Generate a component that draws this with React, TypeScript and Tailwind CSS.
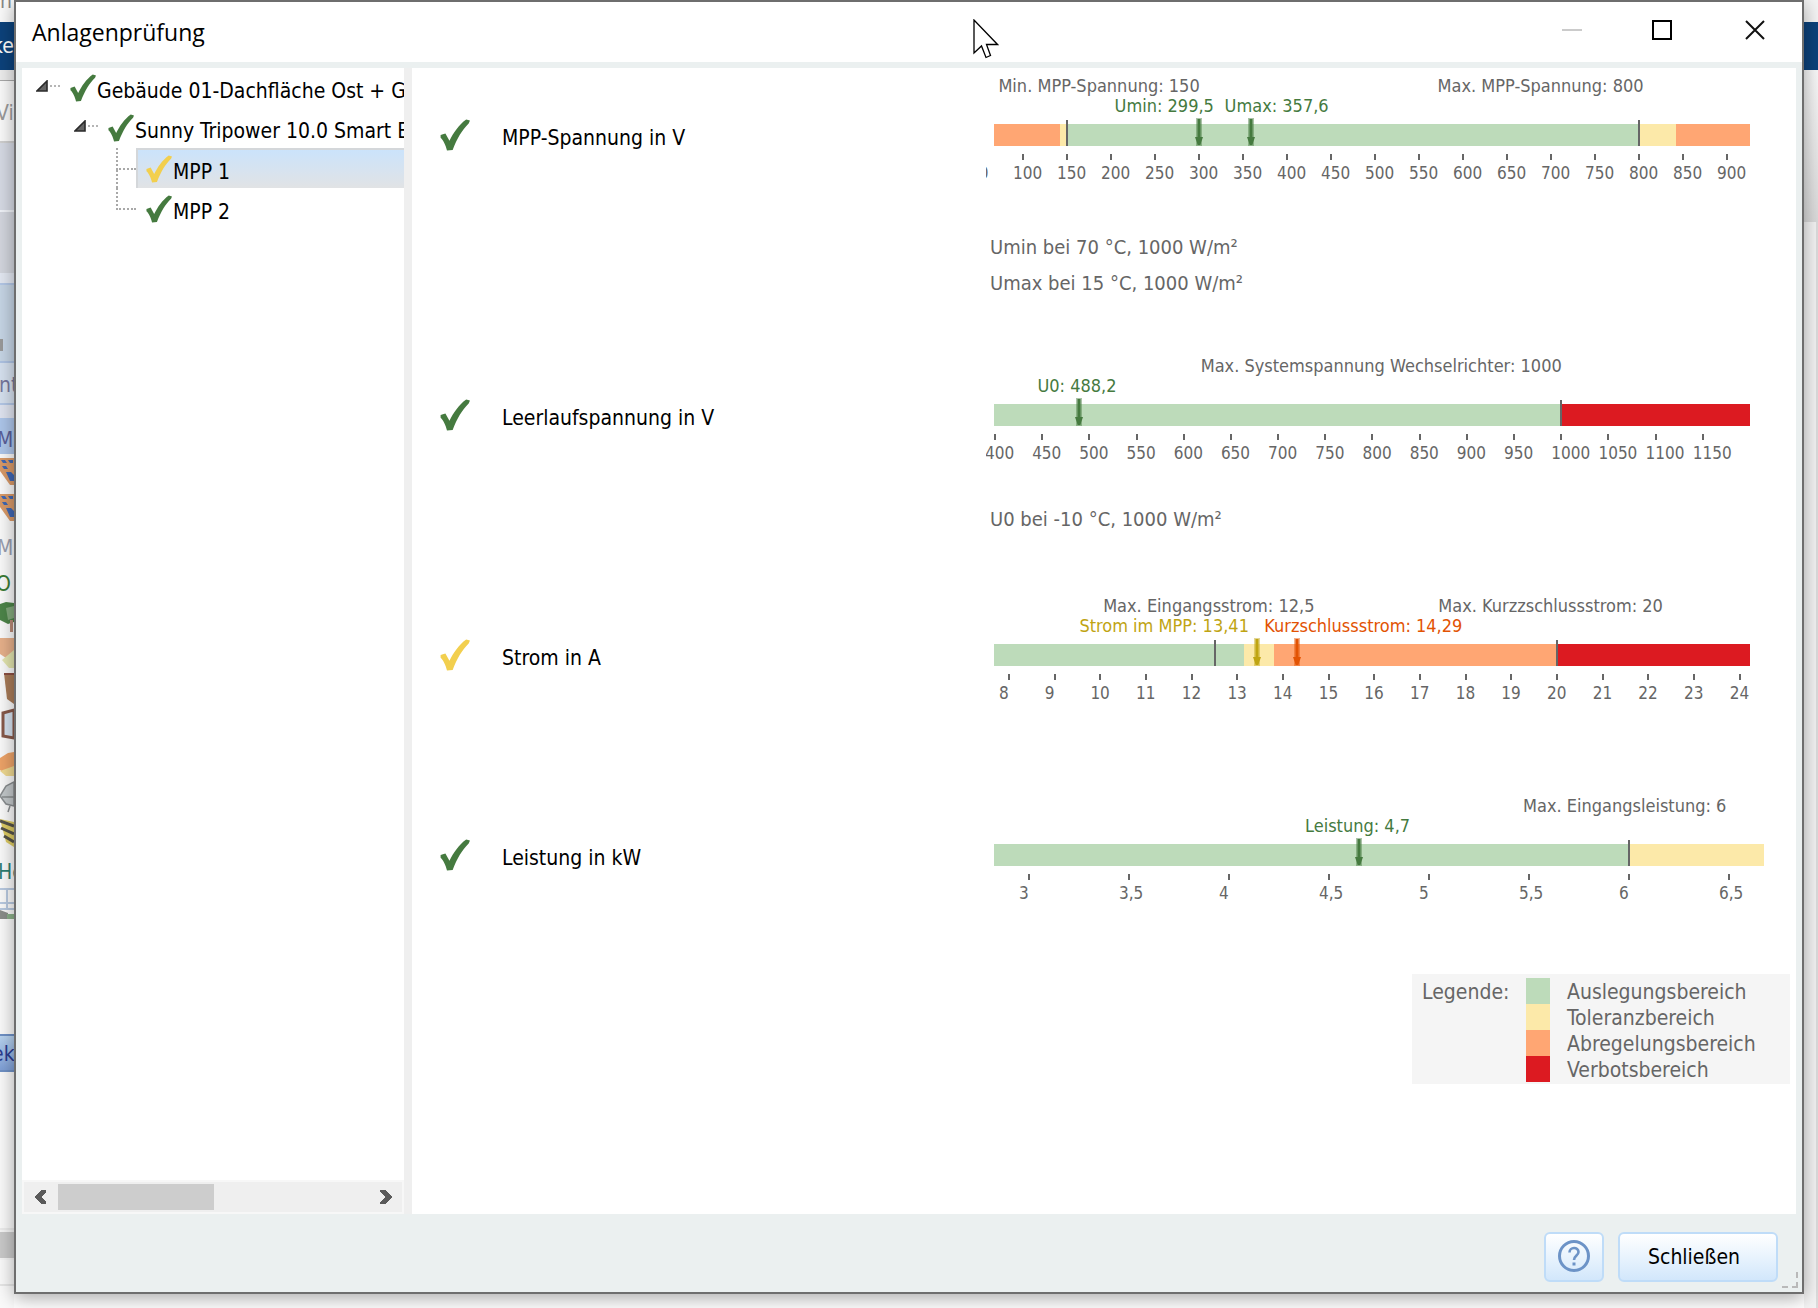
import { Fragment } from "react";

const BRAND = {
  green: "#457a3f",
  yellow: "#bfa413",
  orange: "#e25303",
};

const ZONE = {
  ok: "bg-[#bddbba]",
  tolerance: "bg-[#fce9a9]",
  derating: "bg-[#ffa673]",
  forbidden: "bg-[#dc1a21]",
};

type Tone = keyof typeof BRAND;

type Check = {
  label: string;
  status: "green" | "yellow";
  min: number;
  max: number;
  zones: { to: number; kind: keyof typeof ZONE }[];
  limits: { at: number; text: string; textAt: number }[];
  values: { at: number; text: string; textAt: number; tone: Tone }[];
  ticks: number[];
  notes?: string[];
  rowClass: string;
  noteClass?: string;
};

const range = (from: number, to: number, step: number) =>
  Array.from({ length: Math.round((to - from) / step) + 1 }, (_, i) => from + i * step);

const CHECKS: Check[] = [
  {
    label: "MPP-Spannung in V",
    status: "green",
    min: 67,
    max: 926,
    zones: [
      { to: 142, kind: "derating" },
      { to: 150, kind: "tolerance" },
      { to: 800, kind: "ok" },
      { to: 842, kind: "tolerance" },
      { to: 926, kind: "derating" },
    ],
    limits: [
      { at: 150, text: "Min. MPP-Spannung: 150", textAt: 72 },
      { at: 800, text: "Max. MPP-Spannung: 800", textAt: 571 },
    ],
    values: [
      { at: 299.5, text: "Umin: 299,5", textAt: 204, tone: "green" },
      { at: 358.5, text: "Umax: 357,6", textAt: 329, tone: "green" },
    ],
    ticks: range(50, 900, 50),
    notes: ["Umin bei 70 °C, 1000 W/m²", "Umax bei 15 °C, 1000 W/m²"],
    rowClass: "min-h-[280px]",
    noteClass: "mt-[46px]",
  },
  {
    label: "Leerlaufspannung in V",
    status: "green",
    min: 399,
    max: 1200,
    zones: [
      { to: 1000, kind: "ok" },
      { to: 1200, kind: "forbidden" },
    ],
    limits: [{ at: 1000, text: "Max. Systemspannung Wechselrichter: 1000", textAt: 618 }],
    values: [{ at: 489, text: "U0: 488,2", textAt: 445, tone: "green" }],
    ticks: range(400, 1150, 50),
    notes: ["U0 bei -10 °C, 1000 W/m²"],
    rowClass: "min-h-[240px]",
    noteClass: "mt-[38px]",
  },
  {
    label: "Strom in A",
    status: "yellow",
    min: 7.67,
    max: 24.226,
    zones: [
      { to: 13.15, kind: "ok" },
      { to: 13.8, kind: "tolerance" },
      { to: 20, kind: "derating" },
      { to: 24.226, kind: "forbidden" },
    ],
    limits: [
      { at: 12.5, text: "Max. Eingangsstrom: 12,5", textAt: 10.06 },
      { at: 20, text: "Max. Kurzzschlussstrom: 20", textAt: 17.4 },
    ],
    values: [
      { at: 13.43, text: "Strom im MPP: 13,41", textAt: 9.54, tone: "yellow" },
      { at: 14.3, text: "Kurzschlussstrom: 14,29", textAt: 13.59, tone: "orange" },
    ],
    ticks: range(8, 24, 1),
    rowClass: "min-h-[200px]",
  },
  {
    label: "Leistung in kW",
    status: "green",
    min: 2.825,
    max: 6.605,
    zones: [
      { to: 6, kind: "ok" },
      { to: 6.675, kind: "tolerance" },
    ],
    limits: [{ at: 6, text: "Max. Eingangsleistung: 6", textAt: 5.47 }],
    values: [{ at: 4.65, text: "Leistung: 4,7", textAt: 4.38, tone: "green" }],
    ticks: range(3, 6.5, 0.5),
    rowClass: "min-h-[186px]",
  },
];

const LEGEND = [
  { text: "Auslegungsbereich", color: ZONE.ok },
  { text: "Toleranzbereich", color: ZONE.tolerance },
  { text: "Abregelungsbereich", color: ZONE.derating },
  { text: "Verbotsbereich", color: ZONE.forbidden },
];

function CheckMark({ tone, className }: { tone: "green" | "yellow"; className: string }) {
  return (
    <svg viewBox="0 0 28 30" className={className} fill={tone === "green" ? "#457a3f" : "#f2cf4e"} aria-hidden="true">
      <path d="M0.500 15 L5 13.500 L8.800 20.500 C12.500 13 17.500 5.500 24.500 0.500 L28 1.500 L27 4 C20.500 10.500 16 18 11.800 29 L6.500 29.500 C5.500 25 3 19.500 0.500 17.500 Z" />
    </svg>
  );
}

function Expander() {
  return (
    <>
      <svg viewBox="0 0 12 12" className="w-3 h-3 shrink-0 mb-1" aria-hidden="true">
        <path d="M11 1 V11 H1 Z" fill="#666" stroke="#2b2b2b" strokeWidth="1.6" />
      </svg>
      <span className="w-[10px] ml-[2px] mb-1 border-t-2 border-dotted border-[#b5b5b5] shrink-0" />
    </>
  );
}

function TreeBranch({ last, children, selected }: { last?: boolean; selected?: boolean; children: string }) {
  return (
    <li role="treeitem" aria-selected={!!selected} className="flex h-10 pl-[94px]">
      <span className="flex flex-col w-5 shrink-0">
        <span className="h-[22px] border-l-2 border-b-2 border-dotted border-[#a8a8a8]" />
        {!last && <span className="flex-1 border-l-2 border-dotted border-[#a8a8a8]" />}
      </span>
      <span
        className={
          selected
            ? "flex flex-1 items-center pl-2 border-t-2 border-l-2 border-[#d4d7da] bg-linear-to-b from-[#cbe3fb] to-[#e1e3e5]"
            : "flex flex-1 items-center pl-[10px] pt-[2px]"
        }
      >
        <CheckMark tone={selected ? "yellow" : "green"} className="w-[26px] h-7 shrink-0" />
        <span className="pl-px pt-2">{children}</span>
      </span>
    </li>
  );
}

function Chart({ check }: { check: Check }) {
  const { min, max } = check;
  const pct = (v: number) => `${((v - min) / (max - min)) * 100}%`;
  let from = min;

  return (
    <div className="text-[18px] leading-5 text-[#666] whitespace-nowrap">
      <div className="relative h-5">
        {check.limits.map((l) => (
          <span key={l.text} className="absolute top-0" style={{ left: pct(l.textAt) }}>{l.text}</span>
        ))}
      </div>
      <div className="relative h-5">
        {check.values.map((v) => (
          <span key={v.text} className="absolute top-0" style={{ left: pct(v.textAt), color: BRAND[v.tone] }}>{v.text}</span>
        ))}
      </div>

      <div className="relative flex h-[22px] mt-2">
        {check.zones.map((z, i) => {
          const width = pct(z.to - from + min);
          from = z.to;
          return <span key={i} className={`shrink-0 ${ZONE[z.kind]}`} style={{ width }} />;
        })}
        {check.limits.map((l) => (
          <span key={l.text} className="absolute -top-1 bottom-0 w-[2px] -ml-px bg-[#666]" style={{ left: pct(l.at) }} />
        ))}
        {check.values.map((v) => (
          <svg
            key={v.text}
            viewBox="0 0 10 28"
            className="absolute -top-[6px] w-[10px] h-7 -ml-[5px]"
            style={{ left: pct(v.at) }}
            fill={BRAND[v.tone]}
            aria-hidden="true"
          >
            <rect x="2" y="0" width="6" height="28" opacity="0.45" />
            <rect x="3.5" y="1" width="3" height="26" />
            <path d="M1 19 H9 L6.500 26 H3.500 Z" />
          </svg>
        ))}
      </div>

      {/* labels hang 10px left of their tick and are cut off at the chart edge */}
      <div className="-ml-2 pl-2 overflow-hidden mt-2">
        <div className="relative h-[29px] text-[17px]">
          {check.ticks.map((t) => (
            <Fragment key={t}>
              <span className="absolute top-0 w-[2px] h-[6px] -ml-px bg-[#666]" style={{ left: pct(t) }} />
              <span className="absolute top-[9px] -ml-[10px]" style={{ left: pct(t) }}>
                {String(t).replace(".", ",")}
              </span>
            </Fragment>
          ))}
        </div>
      </div>
    </div>
  );
}

function CheckRow({ check }: { check: Check }) {
  return (
    <section className={`flex pt-2 ${check.rowClass}`}>
      <div className="flex items-center w-[582px] h-[118px] pl-7 shrink-0">
        <CheckMark tone={check.status} className="w-[30px] h-8" />
        <h2 className="pl-8 pt-2 text-[21px]">{check.label}</h2>
      </div>
      <div className="flex-1 mr-[46px]">
        <Chart check={check} />
        {check.notes && (
          <div className={`-ml-1 text-[20px] leading-9 text-[#666] ${check.noteClass}`}>
            {check.notes.map((n) => <p key={n}>{n}</p>)}
          </div>
        )}
      </div>
    </section>
  );
}

/* the sliver of the main program that shows left of the dialog */
function BackdropLeft() {
  return (
    <aside className="w-[14px] shrink-0 overflow-hidden whitespace-nowrap bg-[#fafafa] text-[21px]" aria-hidden="true">
      <div className="h-[22px] leading-[2px] text-[#888]">n</div>
      <div className="h-12 leading-[48px] -ml-2 bg-[#0c427b] text-white">ke</div>
      <div className="h-[11px] bg-[#ededed] border-b border-[#a9a9a9]" />
      <div className="h-[62px] leading-[64px] -ml-1 text-[#9a9a9a] border-b-2 border-[#cfcfcf]">Vi</div>
      <div className="h-[69px] bg-[#d6dae4] border-b-2 border-[#f0f3f8]" />
      <div className="h-[61px] bg-[#d3d6de]" />
      <div className="h-3 bg-[#e3e8f2] border-b-2 border-[#b3c7e6]" />
      <div className="h-[78px] bg-[#c6d5e5] border-b-2 border-[#aec3e3] flex items-end pb-[10px]">
        <div className="w-[3px] h-3 bg-[#999]" />
      </div>
      <div className="h-10 leading-[44px] bg-[#d6e1ef] text-[#77779c] -ml-px">nt</div>
      <div className="h-[15px] bg-[#dfe4f0] border-t-2 border-[#b3c7e6]" />
      <div className="h-9 leading-[44px] -ml-1 pl-px bg-[#adc6ea] text-[#5a5f99]">M</div>
      <PanelGlyph />
      <PanelGlyph />
      <div className="h-9 leading-[44px] -ml-[3px] text-[#9a9fb0]">M</div>
      <div className="h-9 leading-[44px] -ml-1 text-[#3a7a35]">O</div>
      <svg viewBox="0 0 14 252" className="block w-[14px] h-[252px]">
        <path d="M0 6 L6 4 L14 5 V24 L8 26 L0 22Z" fill="#4d8549" />
        <path d="M6 10 L14 8 V20 L8 22Z" fill="#83aa7d" />
        <path d="M10 22 H13 V34 H10Z" fill="#b98b78" />
        <path d="M0 40 H14 V58 L6 60 L0 56Z" fill="#e6b08a" />
        <path d="M2 62 L14 52 V70 H9Z" fill="#e3e5ae" />
        <path d="M4 75 H14 V106 L7 101Z" fill="#a97c58" />
        <path d="M4 76 H14" stroke="#8c4f42" strokeWidth="2" />
        <path d="M3 115 L14 112 V140 L3 138Z" fill="#d5e2ef" stroke="#87594a" strokeWidth="3" />
        <path d="M0 160 L8 155 L14 154 V176 L6 176 L0 172Z" fill="#eda368" />
        <path d="M0 173 L14 168 V178 H6Z" fill="#efd991" />
        <path d="M14 184 L6 188 L0 198 L6 206 L14 208Z" fill="#c3c8ca" stroke="#898d8f" strokeWidth="1.500" />
        <path d="M2 199 H14 M10 208 L8 214" stroke="#898d8f" strokeWidth="1.500" />
        <path d="M0 221 L14 224 V249 L6 244Z" fill="#ddcb64" />
        <path d="M0 223 L14 228 M1 230 L14 236 M4 238 L14 244" stroke="#55534a" strokeWidth="3" />
      </svg>
      <div className="h-9 leading-[44px] -ml-[2px] text-[#2e7f72]">He</div>
      <svg viewBox="0 0 14 36" className="block w-[14px] h-9">
        <path d="M0 3 H14 M7 3 V24 M0 17 H14 M0 23 H14" stroke="#b8c9e0" strokeWidth="2" fill="none" />
        <path d="M0 24 L8 27 V33 H0Z" fill="#8a8d89" />
        <path d="M7 28 H14 V33 H7Z" fill="#8cb18a" />
      </svg>
      <div className="h-28" />
      <div className="h-[38px] leading-9 -ml-2 border-y-2 border-[#6f91c5] bg-linear-to-b from-[#b9d4f0] to-[#7f9fd6] text-[#2b3b8f]">ek</div>
      <div className="h-[158px] border-b-2 border-[#ececec]" />
      <div className="h-[30px] border-y-2 border-[#f5f5f5] bg-[#c9c9c9]" />
      <div className="h-[26px] border-b-2 border-[#e6e6e6]" />
    </aside>
  );
}

function PanelGlyph() {
  return (
    <svg viewBox="0 0 14 36" className="block w-[14px] h-9">
      <path d="M0 4 H14 V31 H10 L0 17Z" fill="#d99a68" />
      <path d="M1 6 H5 L7 9 H3Z M8 6 H13 V9 H10Z M2 12 H6 L8 15 H4Z M6 18 H11 L14 21 V27 H10Z" fill="#3f68b4" />
    </svg>
  );
}

function BackdropRight() {
  return (
    <aside className="flex flex-col w-[14px] shrink-0 bg-[#f4f4f4]" aria-hidden="true">
      <div className="h-[22px]" />
      <div className="h-12 bg-[#0c427b]" />
      <div className="h-[152px] bg-linear-to-b from-[#f8f8f8] to-[#dadada]" />
      <div className="flex-1 border-r-2 border-[#dcdcdc]" />
    </aside>
  );
}

function ScrollArrow({ flip }: { flip?: boolean }) {
  return (
    <svg viewBox="0 0 12 14" className={flip ? "w-3 h-[14px] rotate-180" : "w-3 h-[14px]"} shapeRendering="crispEdges">
      <path d="M12 0 H7 L0 7 L7 14 H12 V12 L7 7 L12 2 Z" fill="#5a5a5a" />
    </svg>
  );
}

export default function App() {
  return (
    <div className="relative flex min-h-screen overflow-hidden bg-white text-black font-['DejaVu_Sans_Condensed','DejaVu_Sans',sans-serif]">
      <BackdropLeft />

      <main className="relative z-10 flex flex-1 flex-col min-w-0 mb-[14px] border-2 border-[#6e6e6e] bg-[#ebf0f0] shadow-[0_4px_18px_rgba(0,0,0,0.35)]">
        <header className="flex items-center h-[60px] bg-white">
          <h1 className="flex-1 pl-4 text-[23px] font-['Open_Sans',sans-serif]">Anlagenprüfung</h1>
          <button aria-label="Minimieren" disabled className="flex items-center justify-center w-[92px] h-full">
            <span className="w-5 h-[2px] mb-1 bg-[#cbcbcb]" />
          </button>
          <button aria-label="Maximieren" className="flex items-center justify-center w-[92px] h-full">
            <span className="w-5 h-5 mb-1 mr-1 border-2 border-black" />
          </button>
          <button aria-label="Fenster schließen" className="flex items-center justify-center w-[92px] h-full">
            <svg viewBox="0 0 20 20" className="w-5 h-5 mb-1 mr-[2px]">
              <path d="M1 1 L19 19 M19 1 L1 19" stroke="#111" strokeWidth="2" />
            </svg>
          </button>
        </header>

        <div className="flex flex-1 min-h-0 px-[6px] pt-[6px]">
          <nav className="flex flex-col w-[382px] shrink-0 overflow-hidden bg-white text-[21px] whitespace-nowrap">
            <ul role="tree" aria-label="Anlage" className="flex-1">
              <li role="treeitem" className="flex items-center h-10 pl-[14px]">
                <Expander />
                <CheckMark tone="green" className="w-[26px] h-7 ml-[10px] shrink-0" />
                <span className="pl-px pt-2">Gebäude 01-Dachfläche Ost + Gebäude 01</span>
              </li>
              <li role="treeitem" className="flex items-center h-10 pl-[52px]">
                <Expander />
                <CheckMark tone="green" className="w-[26px] h-7 ml-[10px] shrink-0" />
                <span className="pl-px pt-2">Sunny Tripower 10.0 Smart Energy</span>
              </li>
              <TreeBranch selected>MPP 1</TreeBranch>
              <TreeBranch last>MPP 2</TreeBranch>
            </ul>
            <div className="flex h-[34px] border-2 border-[#f7f7f7] bg-[#efefef]">
              <button aria-label="Nach links" className="flex items-center w-[34px] pl-[10px]">
                <ScrollArrow />
              </button>
              <div className="flex-1 py-[2px]">
                <div className="w-[156px] h-full bg-[#cdcdcd]" />
              </div>
              <button aria-label="Nach rechts" className="flex items-center justify-end w-[34px] pr-[10px]">
                <ScrollArrow flip />
              </button>
            </div>
          </nav>

          <div className="w-2 shrink-0 bg-[#efefef]" />

          <div className="flex flex-1 flex-col min-w-0 bg-white">
            {CHECKS.map((c) => <CheckRow key={c.label} check={c} />)}

            <div className="flex self-end mr-[6px] pt-1 pb-[2px] pl-[10px] bg-[#f5f5f5] text-[21px] leading-[28px] text-[#666]">
              <span className="w-[104px]">Legende:</span>
              <ul className="w-[264px]">
                {LEGEND.map((l) => (
                  <li key={l.text} className="flex h-[26px]">
                    <span className={`w-6 mr-[17px] shrink-0 ${l.color}`} />
                    {l.text}
                  </li>
                ))}
              </ul>
            </div>
          </div>
        </div>

        <footer className="relative flex items-center justify-end h-[78px] gap-[14px] pr-6 pt-2">
          <button aria-label="Hilfe" className="flex items-center justify-center w-[60px] h-[50px] pb-[2px] rounded-md border-2 border-[#bfdcf8] bg-linear-to-b from-white to-[#d2e7fb]">
            <svg viewBox="0 0 32 32" className="w-8 h-8" fill="none" stroke="#6c93c7">
              <circle cx="16" cy="16" r="14.500" strokeWidth="3" />
              <path d="M11.500 12.500 C11.500 6.500 20.500 6.500 20.500 12 C20.500 15.500 16 15.500 16 20" strokeWidth="2.600" />
              <path d="M16 22.500 V25.500" strokeWidth="3" />
            </svg>
          </button>
          <button className="w-[160px] h-[50px] pr-2 pt-[2px] rounded-md border-2 border-[#bfdcf8] bg-linear-to-b from-white to-[#d2e7fb] text-[21px]">
            Schließen
          </button>
          <span className="absolute right-1 bottom-1 w-4 h-4 border-r-2 border-b-2 border-dashed border-[#b9b9b9]" />
        </footer>
      </main>

      <BackdropRight />

      {/* mouse pointer */}
      <svg viewBox="0 0 26 40" className="absolute z-20 left-[973px] top-[19px] w-[26px] h-10" aria-hidden="true">
        <path
          d="M1 1 V34 L8.500 27 L13 38.500 L17.500 36.500 L13.500 25.500 H24.500 Z"
          fill="#fff"
          stroke="#000"
          strokeWidth="1.300"
        />
      </svg>
    </div>
  );
}
